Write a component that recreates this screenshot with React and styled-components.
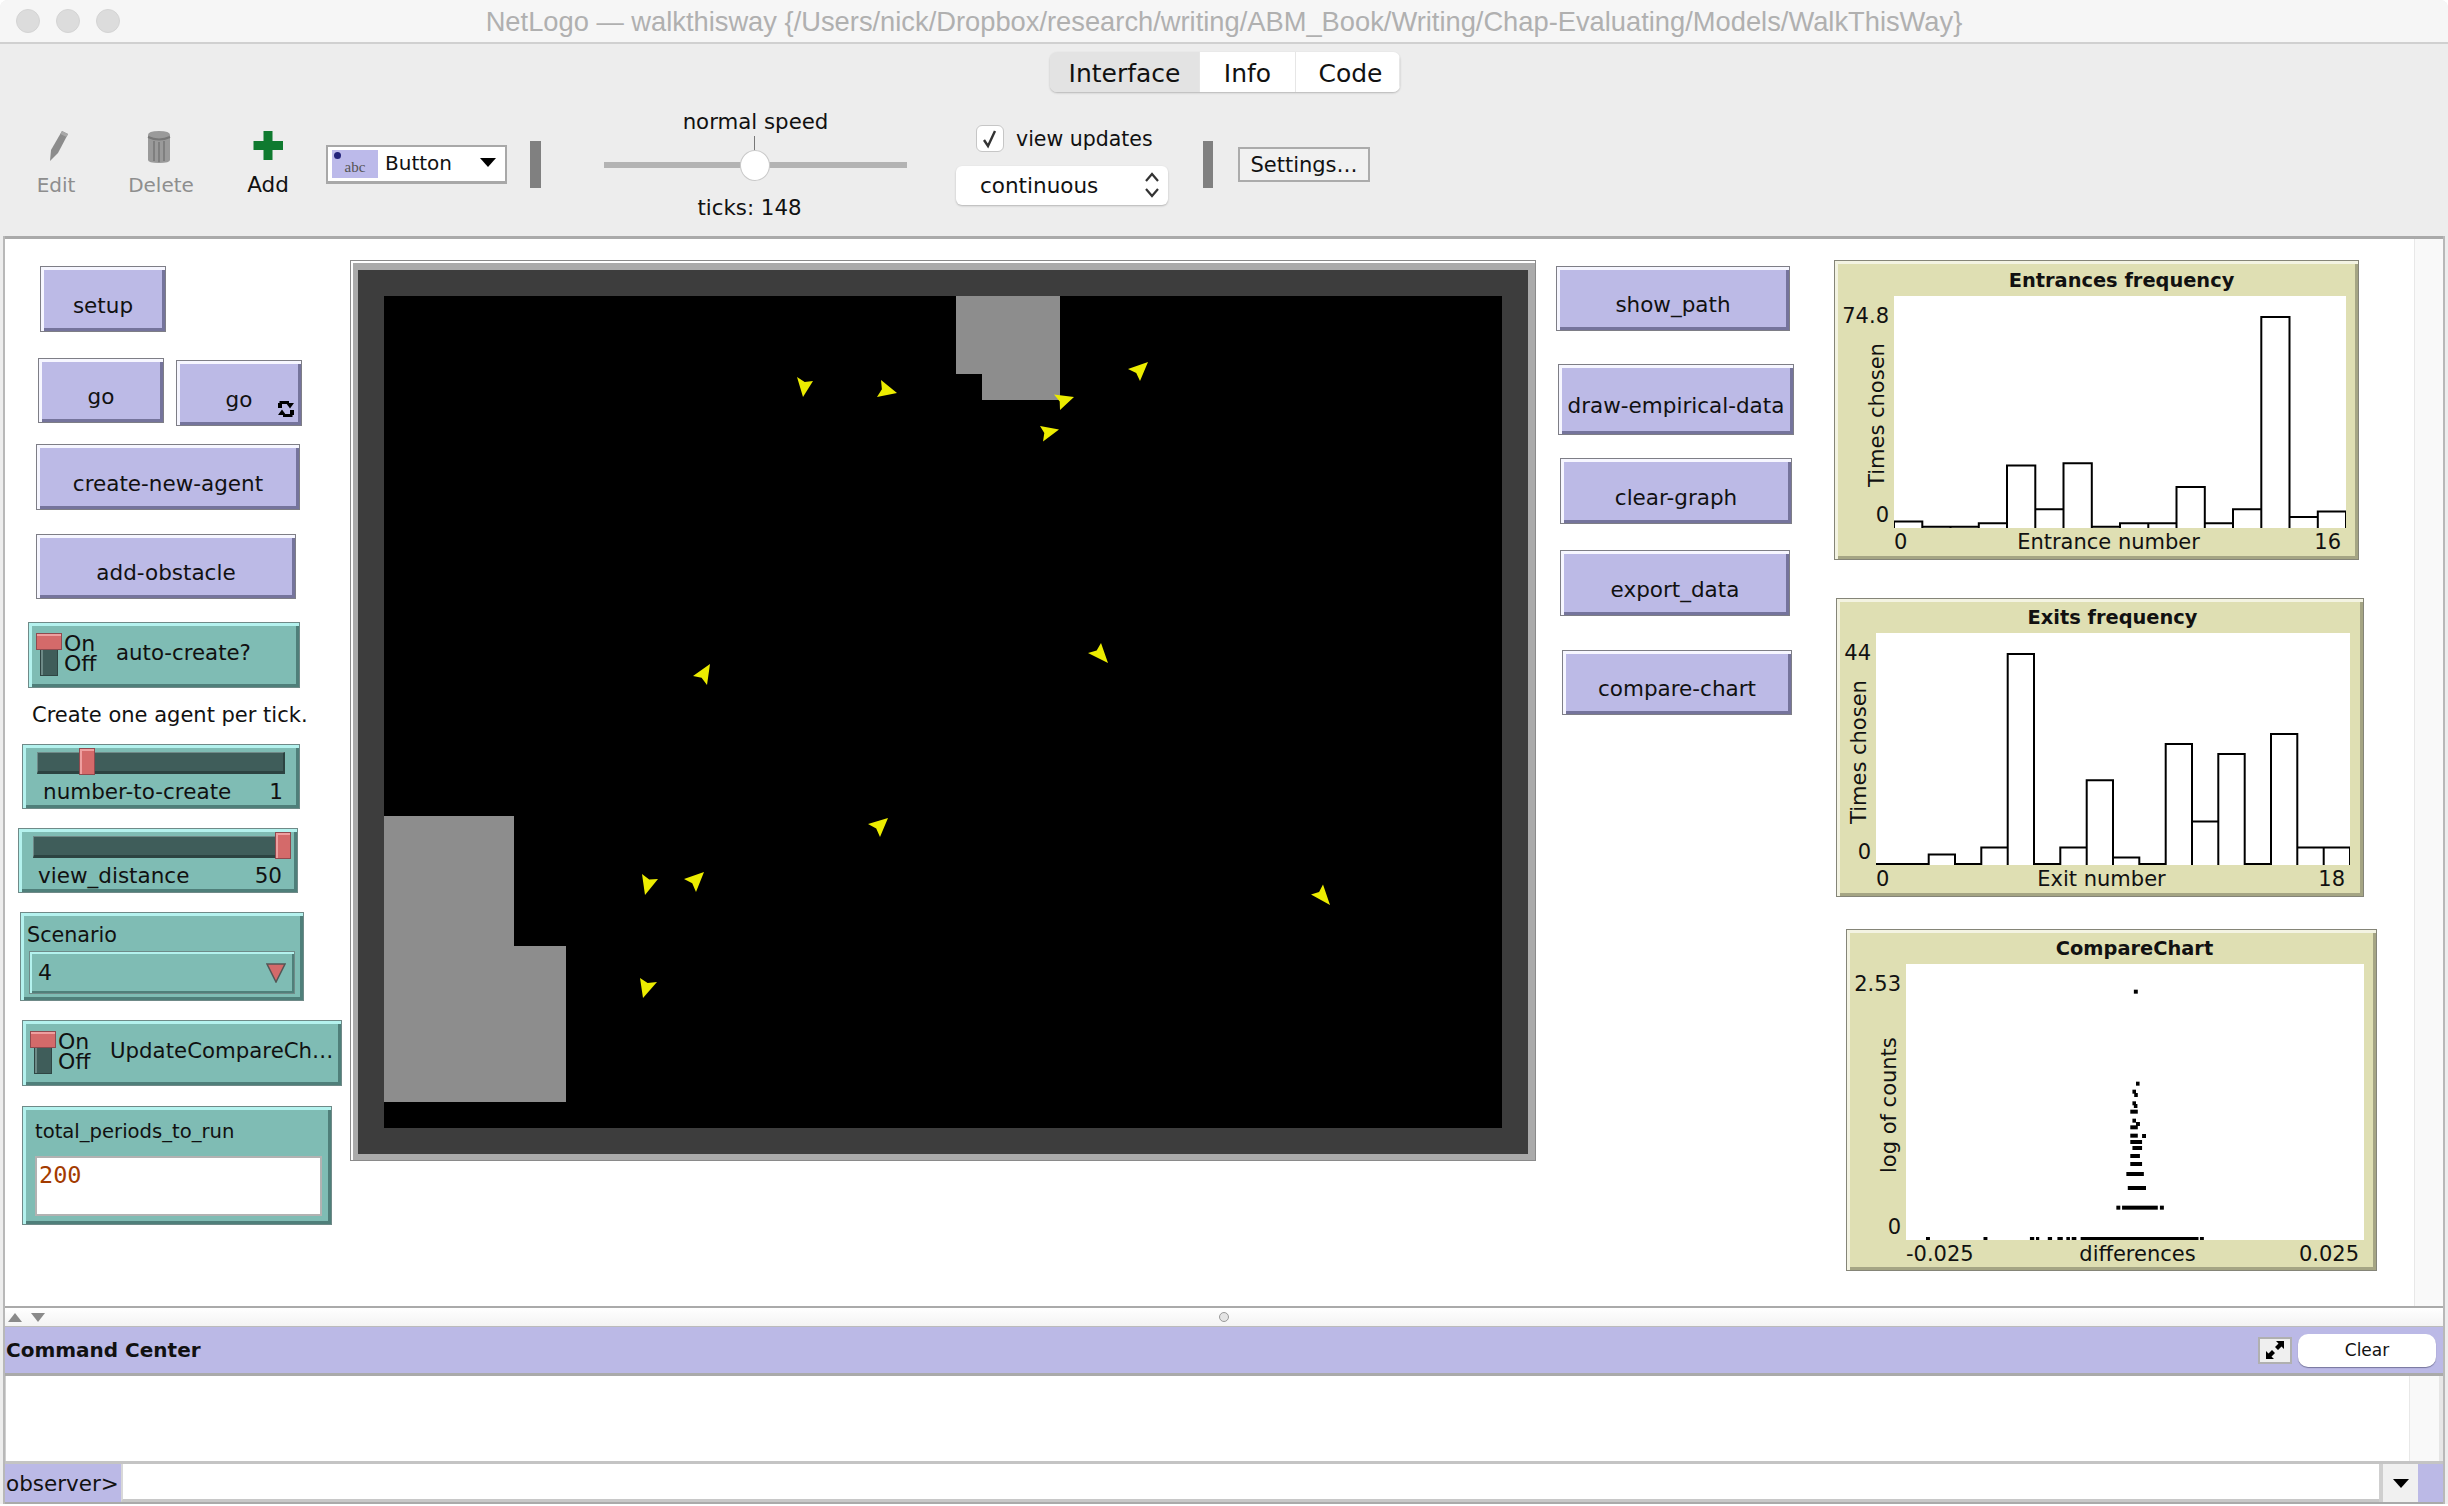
import React from 'react'
import styled, { createGlobalStyle } from 'styled-components'

const OX = 5
const OY = 239

const GlobalStyle = createGlobalStyle`
  html, body { margin: 0; padding: 0; background: #fff; }
  body { font-family: "DejaVu Sans", sans-serif; color: #111; overflow: hidden; }
  * { box-sizing: border-box; }
`

const entranceBars = [6.5, 1.3, 1.3, 4.8, 62.6, 18.7, 64.8, 1.3, 4.8, 4.8, 40.9, 4.8, 18.7, 211, 10.9, 16.5]
const exitBars = [1, 1, 10.4, 1, 17.4, 211, 1, 17.4, 84.8, 7.4, 1, 121, 43.5, 111, 1, 131, 17.4, 17.4]

// x from, x to, y, measured on the reference crop (2.8x wide, 3x high)
const compareDots = [
  [879, 890, 245], [885, 895, 521], [875, 885, 545], [880, 890, 555], [875, 885, 580], [879, 889, 588],
  [869, 890, 605], [875, 885, 632], [885, 896, 642], [869, 890, 652], [902, 913, 678], [869, 890, 677],
  [869, 902, 696], [875, 902, 714], [869, 896, 738], [869, 902, 762], [858, 907, 792], [862, 913, 834],
  [830, 841, 893], [846, 946, 893], [952, 963, 893], [297, 308, 987], [458, 469, 987], [588, 600, 987],
  [605, 614, 987], [638, 650, 987], [665, 680, 987], [690, 700, 987], [705, 718, 987], [730, 1060, 987],
  [1064, 1075, 987],
]

// tip, back corner, back corner
const turtles = [
  [[803, 397], [813, 381], [797, 377]],
  [[897, 393], [877, 397], [881, 380]],
  [[1074, 397], [1060, 410], [1054, 394.5]],
  [[1059, 429.5], [1043, 441.5], [1040, 426]],
  [[1148, 362], [1140, 381], [1128, 369]],
  [[710, 664], [707, 685], [693, 676]],
  [[1108, 663], [1088, 653], [1101, 643]],
  [[888, 818], [880, 837], [868, 824]],
  [[645, 895], [658, 879], [642, 874]],
  [[704, 872], [696, 892], [684, 879]],
  [[1330, 905], [1311, 894.5], [1323, 884.5]],
  [[643, 998], [657, 982], [640, 978]],
]

const turtlePoints = ([t, a, b]) => {
  const mx = (a[0] + b[0]) / 2
  const my = (a[1] + b[1]) / 2
  const nx = mx + (t[0] - mx) * 0.16
  const ny = my + (t[1] - my) * 0.16
  return `${t[0]},${t[1]} ${a[0]},${a[1]} ${nx},${ny} ${b[0]},${b[1]}`
}

const Window = styled.div`
  width: 2448px;
  height: 1504px;
  display: flex;
  flex-direction: column;
  background: #ededed;
  border-radius: 8px 8px 0 0;
  overflow: hidden;
`

const TitleBar = styled.div`
  height: 44px;
  flex: none;
  display: grid;
  grid-template-columns: 1fr auto 1fr;
  align-items: center;
  background: #f6f6f6;
  border-bottom: 2px solid #d0d0d0;
`

const Lights = styled.div`
  display: flex;
  gap: 16px;
  padding-left: 16px;
`

const Light = styled.span`
  width: 24px;
  height: 24px;
  border-radius: 50%;
  background: #dcdcdc;
  border: 1px solid #d4d4d4;
`

const Title = styled.div`
  font-family: "Liberation Sans", Arial, sans-serif;
  font-size: 27.3px;
  padding-top: 2px;
  color: #b0b0b0;
  white-space: nowrap;
`

const Toolbar = styled.div`
  height: 192px;
  flex: none;
  display: flex;
  flex-direction: column;
`

const TabsRow = styled.div`
  display: flex;
  justify-content: center;
  height: 48px;
  padding: 8px 0 0 2px;
`

const Tabs = styled.div`
  display: flex;
  height: 40px;
  border-radius: 7px;
  overflow: hidden;
  box-shadow: 0 1px 2px #b5b5b5;
`

const Tab = styled.div`
  width: ${p => p.$w}px;
  display: flex;
  align-items: center;
  justify-content: center;
  padding: 2px 0 0 ${p => p.$shift || 0}px;
  font-size: 25px;
  background: ${p => (p.$active ? '#e3e3e3' : '#fff')};
  border-right: 1px solid #e6e6e6;
`

const Controls = styled.div`
  flex: 1;
  display: flex;
  align-items: center;
  padding-left: 4px;
`

const ToolButton = styled.div`
  width: ${p => p.$w}px;
  display: flex;
  flex-direction: column;
  align-items: center;
  font-size: ${p => (p.$enabled ? 21.5 : 20)}px;
  line-height: 24px;
  color: ${p => (p.$enabled ? '#111' : '#8e8e8e')};
`

const ToolIcon = styled.svg`
  width: 32px;
  height: 32px;
  margin-bottom: 10px;
  display: block;
`

const WidgetSelect = styled.div`
  width: 181px;
  height: 39px;
  margin-left: 4px;
  display: flex;
  align-items: center;
  background: #fff;
  border: 2px solid #a8a8a8;
  border-bottom-width: 3px;
  padding: 0 9px 2px 4px;
  font-size: 20px;
`

const AbcIcon = styled.div`
  position: relative;
  width: 46px;
  height: 28px;
  flex: none;
  display: flex;
  align-items: flex-end;
  justify-content: center;
  margin: 2px 7px 0 0;
  background: #bcbaea;
  font-family: "Liberation Serif", serif;
  font-size: 15px;
  line-height: 22px;
  color: #555;
`

const AbcDot = styled.span`
  position: absolute;
  left: 2px;
  top: 2px;
  width: 7px;
  height: 7px;
  border-radius: 50%;
  background: #23237a;
`

const Caret = styled.span`
  margin-left: auto;
  width: 0;
  height: 0;
  border-left: 8px solid transparent;
  border-right: 8px solid transparent;
  border-top: 9px solid #000;
`

const Divider = styled.div`
  width: ${p => p.$w}px;
  height: 47px;
  flex: none;
  margin-left: ${p => p.$left}px;
  background: #808080;
`

const SpeedGroup = styled.div`
  width: 303px;
  margin: 2px 0 0 63px;
  display: flex;
  flex-direction: column;
  align-items: center;
  font-size: 21.3px;
  line-height: 24px;
`

const SpeedTrack = styled.div`
  position: relative;
  width: 100%;
  height: 62px;
  display: flex;
  align-items: center;
  justify-content: center;

  &::before {
    content: "";
    width: 100%;
    height: 6px;
    background: #b3b3b3;
  }
`

const SpeedTick = styled.span`
  position: absolute;
  left: 150px;
  top: 2px;
  width: 1px;
  height: 16px;
  background: #777;
`

const SpeedKnob = styled.span`
  position: absolute;
  left: 136px;
  top: 16px;
  width: 30px;
  height: 31px;
  border-radius: 50%;
  background: #fff;
  border: 1px solid #c9c9c9;
`

const Ticks = styled.div`
  margin-right: 12px;
`

const UpdatesGroup = styled.div`
  width: 212px;
  margin: 2px 0 0 49px;
  display: flex;
  flex-direction: column;
  gap: 14px;
`

const CheckRow = styled.div`
  display: flex;
  align-items: center;
  gap: 12px;
  height: 26px;
  padding-left: 20px;
  font-size: 20.5px;
  white-space: nowrap;
`

const CheckBox = styled.span`
  width: 28px;
  height: 27px;
  display: flex;
  align-items: center;
  justify-content: center;
  background: #fff;
  border: 1px solid #c6c6c6;
  border-radius: 6px;
`

const ModeSelect = styled.div`
  height: 39px;
  display: flex;
  align-items: center;
  justify-content: space-between;
  padding: 0 8px 0 24px;
  background: #fff;
  border-radius: 6px;
  box-shadow: 0 1px 2px #b5b5b5;
  font-size: 21.5px;
`

const SettingsButton = styled.div`
  width: 132px;
  height: 35px;
  margin-left: 25px;
  padding-top: 2px;
  display: flex;
  align-items: center;
  justify-content: center;
  background: #f1f1f1;
  border: 2px solid #ababab;
  font-size: 21px;
  white-space: nowrap;
`

const Body = styled.div`
  flex: 1;
  min-height: 0;
  display: flex;
  flex-direction: column;
  margin: 0 3px;
  background: #fff;
  border-left: 2px solid #b8b8b8;
  border-right: 2px solid #b8b8b8;
`

const MainPane = styled.div`
  flex: 1;
  min-height: 0;
  display: flex;
  border-top: 3px solid #aaa;
`

const Canvas = styled.div`
  flex: 1;
  position: relative;
  background: #fff;
`

const ScrollTrack = styled.div`
  width: ${p => p.$w}px;
  flex: none;
  background: #f9f9f9;
  border-left: 1px solid #e8e8e8;
`

// widgets of the interface tab sit on a free canvas, at their saved coordinates
const Widget = styled.div`
  position: absolute;
  left: ${p => p.$x - OX}px;
  top: ${p => p.$y - OY}px;
  width: ${p => p.$w}px;
  height: ${p => p.$h}px;
`

const BlueButton = styled(Widget)`
  display: flex;
  align-items: center;
  justify-content: center;
  padding-top: 12px;
  background: #bcbae6;
  border: 1px solid #7e7e86;
  box-shadow: inset 3px 3px 0 #f6f6ff, inset -3px -3px 0 #75749c;
  font-size: 21.5px;
  white-space: nowrap;
`

const RepeatIcon = styled.svg`
  position: absolute;
  right: 7px;
  bottom: 7px;
  width: 16px;
  height: 18px;
`

const TealWidget = styled(Widget)`
  background: #7fbcb4;
  border: 1px solid #6f8a88;
  box-shadow: inset 3px 3px 0 #b4f2ee, inset -3px -3px 0 #4f7f7a;
`

const SwitchWidget = styled(TealWidget)`
  display: flex;
  align-items: center;
  padding-left: 7px;
  font-size: 21.3px;
  white-space: nowrap;
`

const Toggle = styled.div`
  position: relative;
  width: 26px;
  height: 43px;
  flex: none;
  margin-top: -2px;
`

const ToggleTrack = styled.span`
  position: absolute;
  left: 4px;
  top: 15px;
  width: 18px;
  height: 28px;
  background: #3f5d5a;
  border: 1px solid #2f4543;
  box-shadow: inset 2px 0 0 #6d8a87;
`

const ToggleHandle = styled.span`
  position: absolute;
  left: 0;
  top: 0;
  width: 26px;
  height: 17px;
  background: #d46a6a;
  border: 1px solid #8f4a4f;
  box-shadow: inset 0 2px 0 #ee9f9f;
`

const OnOff = styled.div`
  width: 52px;
  margin: -2px 0 0 2px;
  flex: none;
  font-size: 22px;
  line-height: 20px;
`

const SwitchLabel = styled.span`
  margin-top: -6px;
`

const Note = styled(Widget)`
  padding-top: 1px;
  font-size: 21px;
  line-height: 24px;
  white-space: nowrap;
`

const SliderWidget = styled(TealWidget)`
  padding: 7px 0 0 14px;
  font-size: 21.5px;
`

const SliderTrough = styled.div`
  position: relative;
  width: ${p => p.$w}px;
  height: 22px;
  background: #3f5d5a;
  border: 1px solid #6f8a88;
  border-bottom: 3px solid #2c4341;
  border-right: 2px solid #2c4341;
`

const SliderHandle = styled.span`
  position: absolute;
  left: ${p => p.$left}px;
  top: -5px;
  width: 16px;
  height: 27px;
  background: #d46a6a;
  border: 1px solid #8f4a4f;
  box-shadow: inset 2px 2px 0 #ee9f9f;
`

const SliderLabels = styled.div`
  width: ${p => p.$w}px;
  margin: 6px 0 0 ${p => p.$left}px;
  display: flex;
  justify-content: space-between;
  line-height: 24px;
  white-space: nowrap;
`

const ChooserWidget = styled(TealWidget)`
  padding: 10px 8px 0 6px;
  font-size: 20.7px;
  line-height: 24px;
`

const ChooserBox = styled.div`
  height: 43px;
  margin: 4px 0 0 2px;
  display: flex;
  align-items: center;
  justify-content: space-between;
  padding: 0 8px;
  border: 1px solid #6f8a88;
  box-shadow: inset 2px 2px 0 #b4f2ee, inset -2px -2px 0 #4f7f7a;
  font-size: 22px;
`

const InputWidget = styled(TealWidget)`
  padding: 13px 9px 0 12px;
  font-size: 19.6px;
  line-height: 24px;
`

const InputBox = styled.div`
  height: 60px;
  margin-top: 12px;
  padding: 3px 2px 0;
  background: #fff;
  border: 2px solid #b2b2b2;
  font-family: "DejaVu Sans Mono", monospace;
  font-size: 23.5px;
  line-height: 28px;
  color: #a33b00;
`

const ViewFrame = styled(Widget)`
  padding: 9px 7px 7px;
  background: #aaa;
  border: 1px solid #8a8a8a;
  box-shadow: inset 2px 2px 0 #fff;
`

const ViewPad = styled.div`
  padding: 26px;
  background: #3d3d3d;
`

const World = styled.svg`
  display: block;
  width: 1118px;
  height: 832px;
  background: #000;
`

const PlotWidget = styled(Widget)`
  display: grid;
  grid-template-columns: ${p => p.$left}px ${p => p.$plotW}px 1fr;
  grid-template-rows: ${p => p.$top}px ${p => p.$plotH}px 1fr;
  background: #dfdfb3;
  border: 1px solid #858578;
  box-shadow: inset 3px 3px 0 #f3f3e2, inset -3px -3px 0 #a5a584;
  font-size: 21px;
`

const PlotTitle = styled.div`
  grid-column: 1 / 4;
  display: flex;
  align-items: center;
  justify-content: center;
  padding: 3px 0 0 ${p => p.$pad}px;
  font-weight: 700;
  font-size: 19.4px;
`

const YAxis = styled.div`
  display: flex;
  flex-direction: column;
  align-items: flex-end;
  padding: 8px 5px 1px 0;
  line-height: 24px;
`

const YTitle = styled.div`
  flex: 1;
  display: flex;
  align-items: center;
  writing-mode: vertical-rl;
  transform: rotate(180deg);
  white-space: nowrap;
  justify-content: center;
`

const PlotArea = styled.svg`
  display: block;
  width: 100%;
  height: 100%;
  background: #fff;
`

const XAxis = styled.div`
  grid-column: 2;
  display: grid;
  grid-template-columns: 1fr auto 1fr;
  align-items: center;
  padding: 0 5px 3px 0;
  white-space: nowrap;
`

const XCenter = styled.span`
  margin-left: ${p => p.$ml || 0}px;
  margin-right: ${p => p.$mr || 0}px;
`

const XEnd = styled.span`
  text-align: right;
`

const Splitter = styled.div`
  height: 21px;
  flex: none;
  display: grid;
  grid-template-columns: 1fr auto 1fr;
  align-items: center;
  background: linear-gradient(#fff, #f3f3f3);
  border-top: 2px solid #aaa;
  border-bottom: 1px solid #bbb;
`

const SplitArrows = styled.div`
  display: flex;
  gap: 9px;
  padding-left: 3px;
`

const SplitArrow = styled.span`
  width: 0;
  height: 0;
  border-left: 7px solid transparent;
  border-right: 7px solid transparent;
  ${p => (p.$up ? 'border-bottom: 9px solid #8a8a8a;' : 'border-top: 9px solid #8a8a8a;')}
`

const SplitDot = styled.span`
  width: 10px;
  height: 10px;
  border-radius: 50%;
  background: #e4e4e4;
  border: 1px solid #9a9a9a;
`

const CommandHeader = styled.div`
  height: 49px;
  flex: none;
  display: flex;
  align-items: center;
  padding: 0 7px 0 1px;
  background: #bbb9e6;
  border-bottom: 3px solid #aaa;
`

const CommandTitle = styled.div`
  margin-right: auto;
  font-size: 20px;
  font-weight: 700;
`

const ExpandButton = styled.div`
  width: 34px;
  height: 27px;
  display: flex;
  align-items: center;
  justify-content: center;
  background: #efefef;
  border: 2px solid #b0b0b0;
`

const ClearButton = styled.div`
  width: 138px;
  height: 33px;
  margin-left: 6px;
  display: flex;
  align-items: center;
  justify-content: center;
  background: #fff;
  border-radius: 10px;
  box-shadow: 0 1px 1px #77769c;
  font-size: 17px;
`

const Output = styled.div`
  height: 85px;
  flex: none;
  display: flex;
  justify-content: flex-end;
  background: #fff;
  border-left: 1px solid #d0d0d0;
  border-right: 4px solid #e6e6e6;
`

const InputRow = styled.div`
  height: 43px;
  flex: none;
  display: flex;
  background: #bbb9e6;
  border-top: 3px solid #c4c4c4;
  border-bottom: 2px solid #aaa;
  padding-right: 25px;
`

const Prompt = styled.div`
  width: 116px;
  flex: none;
  display: flex;
  align-items: center;
  padding-left: 1px;
  font-size: 21.5px;
  white-space: nowrap;
`

const CommandInput = styled.div`
  flex: 1;
  background: #fff;
  border-left: 2px solid #d8d8d8;
  border-bottom: 3px solid #c8c8c8;
`

const HistoryButton = styled.div`
  width: 39px;
  flex: none;
  display: flex;
  align-items: center;
  justify-content: center;
  background: #f0f0f0;
  border-left: 4px solid #cfcfcf;
`

const HistoryCaret = styled(Caret)`
  margin: 0;
`

function BlueBtn({ label, ...place }) {
  return <BlueButton {...place}>{label}</BlueButton>
}

function SwitchW({ label, ...place }) {
  return (
    <SwitchWidget {...place}>
      <Toggle>
        <ToggleTrack />
        <ToggleHandle />
      </Toggle>
      <OnOff>On<br />Off</OnOff>
      <SwitchLabel>{label}</SwitchLabel>
    </SwitchWidget>
  )
}

function Histogram({ width, bars }) {
  const bin = width / bars.length
  const d = bars
    .map((h, i) => `M${(i * bin).toFixed(1)} 232V${(232 - h).toFixed(1)}H${((i + 1) * bin).toFixed(1)}V232`)
    .join('')
  return (
    <PlotArea viewBox={`0 0 ${width} 232`}>
      <path d={d} fill="none" stroke="#000" strokeWidth="2" />
    </PlotArea>
  )
}

function DotPlot() {
  return (
    <PlotArea viewBox="0 0 458 276">
      {compareDots.map(([a, b, y], i) => (
        <rect key={i} x={(a - 241) / 2.8} y={(y - 162) / 3 - 2} width={(b - a) / 2.8} height="4" fill="#000" />
      ))}
    </PlotArea>
  )
}

function Plot({ title, titlePad, yMax, yLabel, xMin, xLabel, xMax, shift, left, top, plotW, plotH, children, ...place }) {
  return (
    <PlotWidget $left={left} $top={top} $plotW={plotW} $plotH={plotH} {...place}>
      <PlotTitle $pad={titlePad}>{title}</PlotTitle>
      <YAxis>
        <span>{yMax}</span>
        <YTitle>{yLabel}</YTitle>
        <span>0</span>
      </YAxis>
      {children}
      <span />
      <span />
      <XAxis>
        <span>{xMin}</span>
        <XCenter {...shift}>{xLabel}</XCenter>
        <XEnd>{xMax}</XEnd>
      </XAxis>
    </PlotWidget>
  )
}

export default function App() {
  return (
    <>
      <GlobalStyle />
      <Window>
        <TitleBar>
          <Lights>
            <Light />
            <Light />
            <Light />
          </Lights>
          <Title>NetLogo — walkthisway {'{'}/Users/nick/Dropbox/research/writing/ABM_Book/Writing/Chap-Evaluating/Models/WalkThisWay{'}'}</Title>
        </TitleBar>

        <Toolbar>
          <TabsRow>
            <Tabs>
              <Tab $w={150} $active>Interface</Tab>
              <Tab $w={96}>Info</Tab>
              <Tab $w={104} $shift={6}>Code</Tab>
            </Tabs>
          </TabsRow>
          <Controls>
            <ToolButton $w={104}>
              <ToolIcon viewBox="0 0 32 32">
                <path d="M10 30l1-11L22 0l6 3-10 19z" fill="#8c8c8c" />
                <path d="M22 0l6 3-1.5 3-6-3z" fill="#a8a8a8" />
              </ToolIcon>
              Edit
            </ToolButton>
            <ToolButton $w={106}>
              <ToolIcon viewBox="0 0 32 32">
                <g transform="translate(-2 0)">
                  <path d="M5 4q0-4 11-4t11 4v25q0 3-11 3T5 29z" fill="#9a9a9a" />
                  <path d="M5 6q11 5 22 0" fill="none" stroke="#777" strokeWidth="2" />
                  <path d="M11 10v20M16 11v20M21 10v20" stroke="#7f7f7f" strokeWidth="2" />
                </g>
              </ToolIcon>
              Delete
            </ToolButton>
            <ToolButton $w={108} $enabled>
              <ToolIcon viewBox="0 0 32 32">
                <path d="M11.5 0h9v10h10.5v9H20.5v10h-9V19H1.5v-9h10z" fill="#0f7a2f" />
              </ToolIcon>
              Add
            </ToolButton>
            <WidgetSelect>
              <AbcIcon>
                <AbcDot />
                abc
              </AbcIcon>
              Button
              <Caret />
            </WidgetSelect>
            <Divider $w={11} $left={23} />
            <SpeedGroup>
              <div>normal speed</div>
              <SpeedTrack>
                <SpeedTick />
                <SpeedKnob />
              </SpeedTrack>
              <Ticks>ticks: 148</Ticks>
            </SpeedGroup>
            <UpdatesGroup>
              <CheckRow>
                <CheckBox>
                  <svg width="18" height="20" viewBox="0 0 18 20">
                    <path d="M3 11l4 6 7-15" fill="none" stroke="#333" strokeWidth="2.4" />
                  </svg>
                </CheckBox>
                view updates
              </CheckRow>
              <ModeSelect>
                continuous
                <svg width="16" height="30" viewBox="0 0 16 30">
                  <path d="M2 11l6-7 6 7M2 19l6 7 6-7" fill="none" stroke="#333" strokeWidth="2.2" />
                </svg>
              </ModeSelect>
            </UpdatesGroup>
            <Divider $w={10} $left={35} />
            <SettingsButton>Settings…</SettingsButton>
          </Controls>
        </Toolbar>

        <Body>
          <MainPane>
            <Canvas>
              <BlueBtn label="setup" $x={40} $y={266} $w={126} $h={66} />
              <BlueBtn label="go" $x={38} $y={358} $w={126} $h={65} />
              <BlueButton $x={176} $y={360} $w={126} $h={66}>
                go
                <RepeatIcon viewBox="0 0 16 18">
                  <path d="M0 8V3h1.5V1H11v3H4v4z" fill="#000" />
                  <path d="M8 3h8l-4 5.5z" fill="#000" />
                  <g transform="rotate(180 8 9)">
                    <path d="M0 8V3h1.5V1H11v3H4v4z" fill="#000" />
                    <path d="M8 3h8l-4 5.5z" fill="#000" />
                  </g>
                </RepeatIcon>
              </BlueButton>
              <BlueBtn label="create-new-agent" $x={36} $y={444} $w={264} $h={66} />
              <BlueBtn label="add-obstacle" $x={36} $y={534} $w={260} $h={65} />
              <SwitchW label="auto-create?" $x={28} $y={622} $w={272} $h={66} />
              <Note $x={32} $y={702} $w={290} $h={24}>Create one agent per tick.</Note>

              <SliderWidget $x={22} $y={744} $w={278} $h={65}>
                <SliderTrough $w={248}>
                  <SliderHandle $left={41} />
                </SliderTrough>
                <SliderLabels $w={240} $left={6}>
                  <span>number-to-create</span>
                  <span>1</span>
                </SliderLabels>
              </SliderWidget>
              <SliderWidget $x={18} $y={828} $w={280} $h={65}>
                <SliderTrough $w={245}>
                  <SliderHandle $left={241} />
                </SliderTrough>
                <SliderLabels $w={244} $left={5}>
                  <span>view_distance</span>
                  <span>50</span>
                </SliderLabels>
              </SliderWidget>

              <ChooserWidget $x={20} $y={912} $w={284} $h={89}>
                Scenario
                <ChooserBox>
                  4
                  <svg width="20" height="20" viewBox="0 0 20 20">
                    <path d="M1 1h18l-9 18z" fill="#d46a6a" stroke="#555" strokeWidth="1.5" />
                  </svg>
                </ChooserBox>
              </ChooserWidget>

              <SwitchW label="UpdateCompareCh…" $x={22} $y={1020} $w={320} $h={66} />

              <InputWidget $x={22} $y={1106} $w={310} $h={119}>
                total_periods_to_run
                <InputBox>200</InputBox>
              </InputWidget>

              <ViewFrame $x={350} $y={260} $w={1186} $h={901}>
                <ViewPad>
                  <World viewBox="384 296 1118 832">
                    <path d="M956 296h104v104h-78v-26h-26z" fill="#8d8d8d" />
                    <path d="M384 816h130v130h52v156H384z" fill="#8d8d8d" />
                    {turtles.map(t => (
                      <polygon key={t[0].join()} points={turtlePoints(t)} fill="#ecec00" />
                    ))}
                  </World>
                </ViewPad>
              </ViewFrame>

              <BlueBtn label="show_path" $x={1556} $y={266} $w={234} $h={65} />
              <BlueBtn label="draw-empirical-data" $x={1558} $y={364} $w={236} $h={71} />
              <BlueBtn label="clear-graph" $x={1560} $y={458} $w={232} $h={66} />
              <BlueBtn label="export_data" $x={1560} $y={550} $w={230} $h={66} />
              <BlueBtn label="compare-chart" $x={1562} $y={650} $w={230} $h={65} />

              <Plot
                title="Entrances frequency" titlePad={50} yMax="74.8" yLabel="Times chosen"
                xMin="0" xLabel="Entrance number" xMax="16" shift={{ $mr: 18 }}
                left={59} top={35} plotW={452} plotH={232} $x={1834} $y={260} $w={525} $h={300}
              >
                <Histogram width={452} bars={entranceBars} />
              </Plot>
              <Plot
                title="Exits frequency" titlePad={25} yMax="44" yLabel="Times chosen"
                xMin="0" xLabel="Exit number" xMax="18" shift={{ $mr: 18 }}
                left={39} top={34} plotW={474} plotH={232} $x={1836} $y={598} $w={528} $h={299}
              >
                <Histogram width={474} bars={exitBars} />
              </Plot>
              <Plot
                title="CompareChart" titlePad={46} yMax="2.53" yLabel="log of counts"
                xMin="-0.025" xLabel="differences" xMax="0.025" shift={{ $ml: 10 }}
                left={59} top={34} plotW={458} plotH={276} $x={1846} $y={929} $w={531} $h={342}
              >
                <DotPlot />
              </Plot>
            </Canvas>
            <ScrollTrack $w={29} />
          </MainPane>

          <Splitter>
            <SplitArrows>
              <SplitArrow $up />
              <SplitArrow />
            </SplitArrows>
            <SplitDot />
            <span />
          </Splitter>

          <CommandHeader>
            <CommandTitle>Command Center</CommandTitle>
            <ExpandButton>
              <svg width="18" height="18" viewBox="0 0 18 18">
                <path d="M10 0h8v8l-2.5-2.5L12 9 9 6l3.5-3.5zM0 18v-8l2.5 2.5L6 9l3 3-3.5 3.5L8 18z" fill="#000" />
              </svg>
            </ExpandButton>
            <ClearButton>Clear</ClearButton>
          </CommandHeader>

          <Output>
            <ScrollTrack $w={30} />
          </Output>

          <InputRow>
            <Prompt>observer&gt;</Prompt>
            <CommandInput />
            <HistoryButton>
              <HistoryCaret />
            </HistoryButton>
          </InputRow>
        </Body>
      </Window>
    </>
  )
}
